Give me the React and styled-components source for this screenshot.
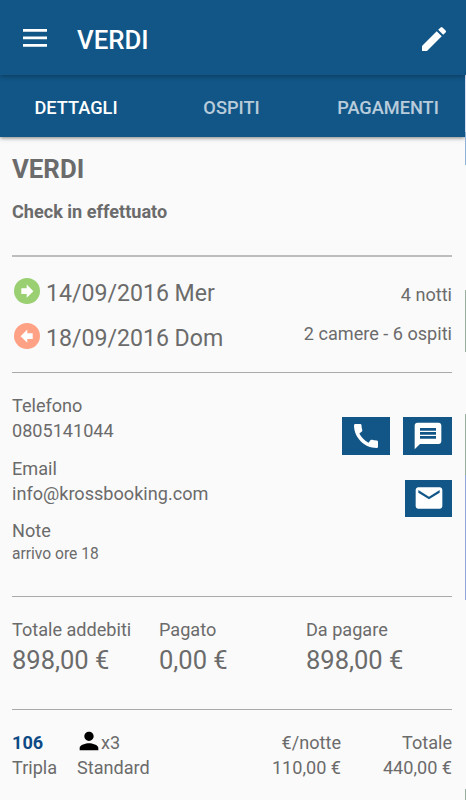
import React from 'react';
import styled, { createGlobalStyle } from 'styled-components';
import { MdEdit, MdCall, MdMessage, MdEmail, MdPerson } from 'react-icons/md';

const colors = {
  primary: '#115687',
  text: '#6b6b6b',
  background: '#fafafa',
  divider: '#a9a9a9',
  checkIn: '#9ad072',
  checkOut: '#ffa184',
};

const GlobalStyle = createGlobalStyle`
  * {
    box-sizing: border-box;
  }
  body {
    margin: 0;
    background: ${colors.background};
    color: ${colors.text};
    font-family: Roboto, sans-serif;
  }
`;

const tabs = ['DETTAGLI', 'OSPITI', 'PAGAMENTI'];

const totals = [
  { label: 'Totale addebiti', value: '898,00 €' },
  { label: 'Pagato', value: '0,00 €' },
  { label: 'Da pagare', value: '898,00 €' },
];

// slices of the calendar that stays visible behind the detail panel
const calendarSlices = [
  { height: 57, color: '#d5dcf0' },
  { height: 33, color: '#8fb3d6' },
  { height: 125, color: '#fafafa' },
  { height: 62, color: '#97b09b' },
  { height: 62, color: '#fafafa' },
  { height: 61, color: '#97b09b' },
  { height: 125, color: '#92a6dc' },
  { height: 189, color: '#fafafa' },
  { height: 11, color: '#97b09b' },
];

const DateArrow = ({ color, back }) => (
  <ArrowIcon viewBox="0 0 26 26" aria-hidden="true">
    <circle cx="13" cy="13" r="13" fill={color} />
    <path
      d="M7.3 10.2h5.4V6.6l6.7 6.6-6.7 6.6v-3.9H7.3z"
      fill="#fff"
      transform={back ? 'translate(26 0) scale(-1 1)' : undefined}
    />
  </ArrowIcon>
);

const Field = ({ label, children, small }) => (
  <FieldBox>
    <Line>{label}</Line>
    <Line $small={small}>{children}</Line>
  </FieldBox>
);

const App = () => (
  <Screen>
    <GlobalStyle />
    <Toolbar>
      <MenuIcon viewBox="0 0 24 18" aria-label="Menu">
        <path d="M0 0h24v2.8H0zM0 7.5h24v2.8H0zM0 15h24v2.8H0z" fill="#fff" />
      </MenuIcon>
      <ToolbarTitle>VERDI</ToolbarTitle>
      <MdEdit size={32} />
    </Toolbar>
    <Main>
      <Panel>
        <TabBar>
          {tabs.map((tab, index) => (
            <Tab key={tab} $active={index === 0}>
              {tab}
            </Tab>
          ))}
        </TabBar>
        <Content>
          <Summary>
            <Name>VERDI</Name>
            <Status>Check in effettuato</Status>
          </Summary>
          <Stay>
            <div>
              <DateRow>
                <DateArrow color={colors.checkIn} />
                14/09/2016 Mer
              </DateRow>
              <DateRow>
                <DateArrow color={colors.checkOut} back />
                18/09/2016 Dom
              </DateRow>
            </div>
            <StayInfo>
              <Line>4 notti</Line>
              <Line>2 camere - 6 ospiti</Line>
            </StayInfo>
          </Stay>
          <Contacts>
            <div>
              <Field label="Telefono">0805141044</Field>
              <Field label="Email">info@krossbooking.com</Field>
              <Field label="Note" small>
                arrivo ore 18
              </Field>
            </div>
            <Actions>
              <ActionRow>
                <ActionButton $width={48.5} aria-label="Chiama">
                  <MdCall size={32} />
                </ActionButton>
                <ActionButton $width={49} aria-label="Messaggio">
                  <MdMessage size={32} />
                </ActionButton>
              </ActionRow>
              <ActionButton $width={47} aria-label="Email">
                <MdEmail size={32} />
              </ActionButton>
            </Actions>
          </Contacts>
          <Totals>
            {totals.map(({ label, value }) => (
              <div key={label}>
                <Line>{label}</Line>
                <Amount>{value}</Amount>
              </div>
            ))}
          </Totals>
          <Room>
            <div>
              <RoomNumber>106</RoomNumber>
              <Line>Tripla</Line>
            </div>
            <div>
              <Guests>
                <MdPerson size={28} color="#000" />
                x3
              </Guests>
              <Line>Standard</Line>
            </div>
            <RightCell>
              <Line>€/notte</Line>
              <Line>110,00 €</Line>
            </RightCell>
            <RightCell>
              <Line>Totale</Line>
              <Line>440,00 €</Line>
            </RightCell>
          </Room>
        </Content>
      </Panel>
      <CalendarEdge>
        {calendarSlices.map(({ height, color }, index) => (
          <Slice key={index} $height={height} $color={color} />
        ))}
      </CalendarEdge>
    </Main>
  </Screen>
);

export default App;

const Screen = styled.div`
  display: flex;
  flex-direction: column;
  width: 466px;
  height: 800px;
  overflow: hidden;
  background: ${colors.background};
`;

const Toolbar = styled.header`
  position: relative;
  z-index: 1;
  display: flex;
  align-items: center;
  flex: none;
  height: 75px;
  padding: 3px 16px 0 23px;
  color: #fff;
  background: ${colors.primary};
  box-shadow: 0 1px 5px rgba(0, 0, 0, 0.35);
`;

const MenuIcon = styled.svg`
  width: 24px;
  height: 18px;
  margin-bottom: 2px;
`;

const ToolbarTitle = styled.h1`
  flex: 1;
  margin: 1px 0 0 30px;
  font-size: 25.8px;
  font-weight: 500;
  line-height: 32px;
`;

const Main = styled.main`
  display: flex;
  flex: 1;
  min-height: 0;
`;

const Panel = styled.div`
  flex: 1;
`;

const TabBar = styled.nav`
  display: grid;
  grid-template-columns: 152px 159px 1fr;
  align-items: center;
  height: 62px;
  color: #fff;
  background: ${colors.primary};
  box-shadow: 0 1px 4px rgba(0, 0, 0, 0.5);
`;

const Tab = styled.span`
  padding-top: 2px;
  font-size: 18.2px;
  font-weight: 500;
  text-align: center;
  opacity: ${({ $active }) => ($active ? 1 : 0.7)};
`;

const Content = styled.div`
  padding: 0 13px 0 12px;
`;

const Section = styled.section`
  border-bottom: 1px solid ${colors.divider};
`;

const Line = styled.div`
  font-size: ${({ $small }) => ($small ? 15.6 : 18.1)}px;
  line-height: ${({ $small }) => ($small ? 21 : 24.8)}px;
  white-space: nowrap;
`;

const Summary = styled(Section)`
  height: 120px;
  padding-top: 17px;
  border-bottom: 2px solid #bdbdbd;
`;

const Name = styled.h2`
  margin: 0 0 16px;
  font-size: 25.8px;
  font-weight: 700;
  line-height: 30px;
`;

const Status = styled.p`
  margin: 0;
  font-size: 18.1px;
  font-weight: 700;
  line-height: 24px;
`;

const Stay = styled(Section)`
  display: flex;
  justify-content: space-between;
  height: 116px;
  padding-top: 20px;
`;

const DateRow = styled.div`
  display: flex;
  align-items: center;
  gap: 6px;
  height: 30px;
  margin: 1px 0 15px 2px;
  font-size: 23.1px;
`;

const ArrowIcon = styled.svg`
  width: 26px;
  height: 26px;
  margin-bottom: 4px;
`;

const StayInfo = styled.div`
  display: flex;
  flex-direction: column;
  gap: 14.2px;
  padding-top: 6px;
  text-align: right;
`;

const Contacts = styled(Section)`
  display: flex;
  justify-content: space-between;
  height: 224px;
  padding-top: 21.4px;
`;

const FieldBox = styled.div`
  margin-bottom: 12.8px;
`;

const Actions = styled.div`
  display: flex;
  flex-direction: column;
  align-items: flex-end;
  gap: 25px;
  padding-top: 23px;
`;

const ActionRow = styled.div`
  display: flex;
  gap: 13px;
`;

const ActionButton = styled.button`
  display: flex;
  align-items: center;
  justify-content: center;
  width: ${({ $width }) => $width}px;
  height: 37.4px;
  padding: 0;
  color: #fff;
  background: ${colors.primary};
  border: 0;
`;

const Totals = styled(Section)`
  display: grid;
  grid-template-columns: 147px 147px 1fr;
  height: 113px;
  padding-top: 20.6px;
`;

const Amount = styled.div`
  font-size: 25.5px;
  line-height: 37px;
`;

const Room = styled.section`
  display: grid;
  grid-template-columns: 65px 1fr 120px 111px;
  padding-top: 21px;
`;

const RoomNumber = styled(Line)`
  color: #0d4a85;
  font-weight: 700;
`;

const Guests = styled(Line)`
  display: flex;
  align-items: center;
  height: 24.8px;

  svg {
    margin: -5px -2px 0 -2px;
  }
`;

const RightCell = styled.div`
  text-align: right;
`;

const CalendarEdge = styled.aside`
  flex: none;
  width: 1px;
`;

const Slice = styled.div`
  height: ${({ $height }) => $height}px;
  background: ${({ $color }) => $color};
`;
